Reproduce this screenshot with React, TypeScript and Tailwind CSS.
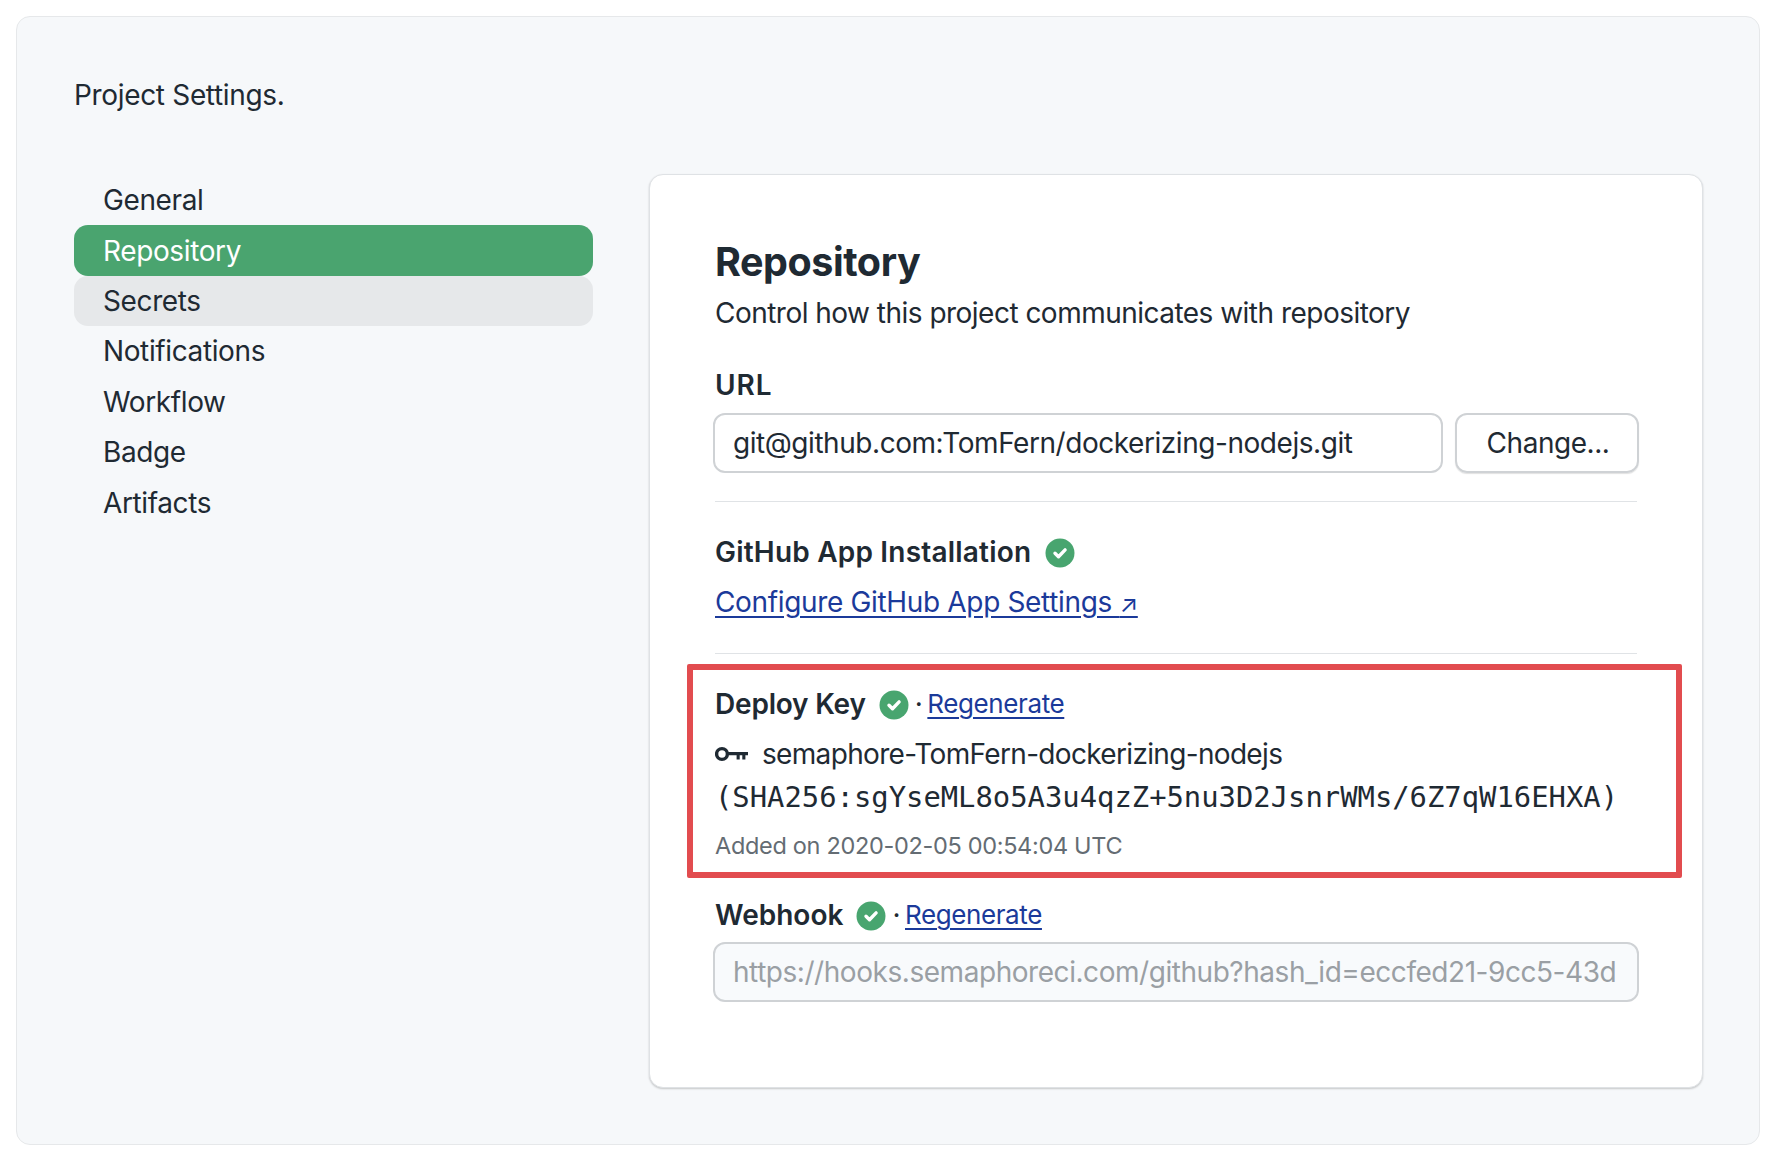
const sans = "font-['Inter','Liberation_Sans',sans-serif]";

function Check() {
  return (
    <svg width="30" height="30" viewBox="0 0 30 30" className="shrink-0">
      <circle cx="15" cy="15" r="14.5" fill="#48a56f" />
      <path d="M10 15.3l3.5 3.4 6.6-6.8" fill="none" stroke="#fff" strokeWidth="3.4" strokeLinecap="round" strokeLinejoin="round" />
    </svg>
  );
}

function KeyIcon() {
  return (
    <svg width="33" height="16" viewBox="0 0 33 16" className="shrink-0">
      <circle cx="7" cy="8" r="5.4" fill="none" stroke="#1f2a33" strokeWidth="3.4" />
      <path d="M12 6h21v3.2h-2.6v4.3h-3.1V9.2h-2.6v4.3h-3.1V9.2H12z" fill="#1f2a33" />
    </svg>
  );
}

const nav = ["General", "Repository", "Secrets", "Notifications", "Workflow", "Badge", "Artifacts"];

export default function App() {
  return (
    <div className={`${sans} w-[1774px] h-[1160px] bg-white p-4 text-[#1f2a33] text-[28px] leading-[40px] tracking-[-0.45px]`}>
      <div className="h-[1129px] w-[1744px] rounded-[14px] border border-[#e6e8ea] bg-[#f6f8fa] pl-[57px] pr-[56px] pt-[58px]">
        <div className="h-[40px] tracking-[-0.33px]">Project Settings.</div>
        <div className="mt-[59px] flex items-start">
          <nav className="mt-[1px] w-[519px] shrink-0 tracking-[-0.38px]">
            {nav.map((n, i) => (
              <div
                key={n}
                className={`h-[50.4px] flex items-center rounded-[14px] pl-[29px] ${
                  i === 1 ? "bg-[#4aa46f] text-white" : i === 2 ? "bg-[#e6e8ea]" : ""
                }`}
              >
                {n}
              </div>
            ))}
          </nav>
          <main className="relative ml-[56px] h-[914px] w-[1054px] rounded-[14px] border border-[#dfe2e5] bg-white pl-[65px] pr-[65px] pt-[64px] shadow-[0_1px_2px_rgba(0,0,0,0.2)]">
            <h1 className="h-[46px] text-[39.5px] leading-[46px] font-bold tracking-[-0.45px]">Repository</h1>
            <p className="mt-[8px] h-[40px] tracking-[-0.52px]">Control how this project communicates with repository</p>
            <div className="mt-[32px] h-[40px] font-semibold tracking-[1px]">URL</div>
            <div className="mt-[8px] flex gap-[12px]">
              <div className="ml-[-2px] h-[60px] w-[730px] shrink-0 rounded-[12px] border-2 border-[#cfd2d5] pl-[18px] flex items-center">git@github.com:TomFern/dockerizing-nodejs.git</div>
              <div className="h-[60px] w-[184px] shrink-0 rounded-[12px] border-2 border-[#cfd2d5] flex items-center justify-center shadow-[0_1px_1px_rgba(0,0,0,0.12)] pl-[2px]">Change...</div>
            </div>
            <hr className="mt-[28px] w-[922px] border-t border-[#e0e3e6]" />
            <div className="mt-[30px] flex h-[40px] items-center font-semibold tracking-[0.2px]">GitHub App Installation<span className="ml-[14px] mt-[2px]"><Check /></span></div>
            <a className="mt-[10px] block h-[40px] text-[#1b3a9a] underline underline-offset-[4px] tracking-[-0.34px]">Configure GitHub App Settings <span className="text-[24px]">↗</span></a>
            <hr className="mt-[31px] w-[922px] border-t border-[#e0e3e6]" />
            <div className="mt-[30px] flex h-[40px] items-center">
              <span className="font-semibold tracking-[-0.2px]">Deploy Key</span>
              <span className="ml-[13px] mt-[2px]"><Check /></span>
              <span className="ml-[6px] mr-[5px]">·</span>
              <a className="text-[26px] text-[#1b3a9a] underline underline-offset-[4px] tracking-[-0.4px]">Regenerate</a>
            </div>
            <div className="mt-[10px] flex h-[40px] items-center">
              <KeyIcon />
              <span className="ml-[14px] tracking-[-0.67px]">semaphore-TomFern-dockerizing-nodejs</span>
            </div>
            <div className="mt-[3px] h-[40px] whitespace-nowrap font-['DejaVu_Sans_Mono','Liberation_Mono',monospace] text-[28.85px] tracking-normal">(SHA256:sgYseML8o5A3u4qzZ+5nu3D2JsnrWMs/6Z7qW16EHXA)</div>
            <div className="mt-[9px] h-[40px] text-[23.5px] tracking-[-0.32px] text-[#646c73]">Added on 2020-02-05 00:54:04 UTC</div>
            <div className="mt-[29px] flex h-[40px] items-center">
              <span className="font-semibold tracking-[0px]">Webhook</span>
              <span className="ml-[13px] mt-[2px]"><Check /></span>
              <span className="ml-[6px] mr-[5px]">·</span>
              <a className="text-[26px] text-[#1b3a9a] underline underline-offset-[4px] tracking-[-0.4px]">Regenerate</a>
            </div>
            <div className="ml-[-2px] mt-[7px] flex h-[60px] w-[926px] items-center overflow-hidden whitespace-nowrap rounded-[12px] border-2 border-[#cfd2d5] bg-[#f8fafc] pl-[18px] pr-[17px] text-[#9a9fa4]">https://hooks.semaphoreci.com/github?hash_id=eccfed21-9cc5-43d</div>
            <div className="absolute left-[37px] top-[489px] h-[214px] w-[995px] rounded-[2px] border-[6px] border-[#e24c4f]" />
          </main>
        </div>
      </div>
    </div>
  );
}
